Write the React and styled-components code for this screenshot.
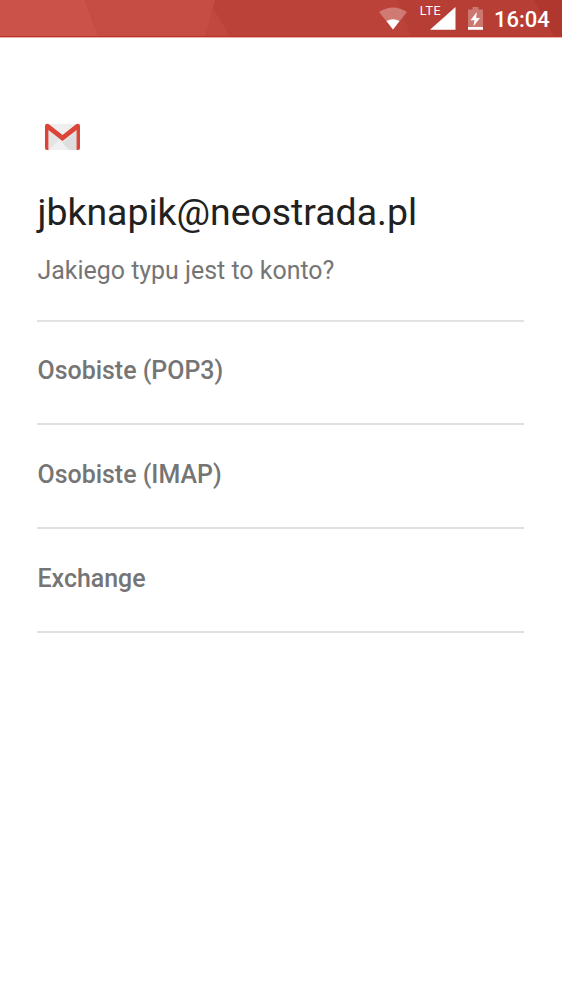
import React from "react";
import styled, { createGlobalStyle } from "styled-components";

const GlobalStyle = createGlobalStyle`
  * { box-sizing: border-box; }
  body { margin: 0; background: #fff; font-family: Roboto, sans-serif; overflow: hidden; }
`;

const Screen = styled.div`
  width: 562px;
  height: 999px;
  background: #fff;
`;

const StatusBar = styled.header`
  position: relative;
  height: 38px;
  background: #bb4238;
`;

const Backdrop = styled.svg`
  position: absolute;
  inset: 0;
  display: block;
`;

const StatusItems = styled.div`
  position: relative;
  display: flex;
  align-items: flex-start;
  justify-content: flex-end;
  height: 100%;
  padding-right: 12.2px;
  color: #fff;
`;

const StatusIcon = styled.svg`
  display: block;
  flex: none;
  margin: 7px ${(p) => p.$gap}px 0 0;
`;

const Network = styled.span`
  margin: 4px -11.2px 0 0;
  font-size: 12.5px;
  line-height: 14px;
  letter-spacing: 0.6px;
`;

const Clock = styled.time`
  padding-top: 7px;
  font-size: 22px;
  font-weight: 500;
  line-height: 26px;
`;

const Content = styled.main`
  padding: 85px 38px 0 37px;
`;

const Logo = styled.svg`
  display: block;
  margin-left: 8px;
`;

const Email = styled.h1`
  margin: 39px 0 0 0.5px;
  font-size: 37.4px;
  font-weight: 400;
  line-height: 44px;
  color: #212121;
`;

const Question = styled.p`
  margin: 21.5px 0 0 0.5px;
  font-size: 24.95px;
  line-height: 29px;
  color: #757575;
`;

const Options = styled.div`
  margin-top: 35px;
  border-top: 2px solid #e2e2e2;
`;

const Option = styled.button`
  display: flex;
  align-items: center;
  width: 100%;
  height: 103.8px;
  padding: 0 0 3.6px 0.5px;
  border: 0;
  border-bottom: 2px solid #e0e0e0;
  background: none;
  font: 500 24.95px/29px Roboto, sans-serif;
  color: #757575;
  text-align: left;
`;

const accountTypes = ["Osobiste (POP3)", "Osobiste (IMAP)", "Exchange"];

function GmailLogo() {
  return (
    <Logo width="35" height="28" viewBox="0 0 36 28" preserveAspectRatio="none" aria-label="Gmail">
      <path d="M2 1H34Q36 1 36 3V25Q36 27 34 27H2Q0 27 0 25V3Q0 1 2 1Z" fill="#e9e9e9" />
      <path d="M4 27L14 17L18 20L22 17L32 27Z" fill="#f0f0f0" />
      <path d="M4 8L14 17L4 27Z" fill="#e4e4e4" />
      <path d="M18 20L33 7V27H25Z" fill="#dedede" />
      <path d="M3 1H33L18 13Z" fill="#eeeeee" />
      <path d="M0 3Q0 .8 2.4 .8Q3.5 .8 4.3 1.5L18 12L31.7 1.5Q32.5 .8 33.6 .8Q36 .8 36 3V25Q36 27 34 27H32.5V7L18 18L3.5 7V27H2Q0 27 0 25Z" fill="#db4437" />
    </Logo>
  );
}

export default function App() {
  return (
    <Screen>
      <GlobalStyle />
      <StatusBar>
        <Backdrop width="562" height="38" viewBox="0 0 562 38">
          <path d="M0 0H85L99 38H0Z" fill="#cb5248" />
          <path d="M85 0H215L205 38H99Z" fill="#c64d43" />
          <path d="M213 8L231 38H205Z" fill="#c1483e" />
          <path d="M397 0H534L555 38H412Z" fill="#b73e34" />
          <path d="M534 0H562V38H555Z" fill="#b0372e" />
          <path d="M0 36H562V37H0Z" fill="#bd3228" />
          <path d="M0 37H562V38H0Z" fill="#eeb0aa" />
        </Backdrop>
        <StatusItems>
          <StatusIcon $gap={13} width="28" height="24" viewBox="0 0 28 24">
            <path d="M0 5Q14-4 28 5L14 22.5Z" fill="#fff" fillOpacity=".3" />
            <path d="M7.5 14Q14 10.5 20.5 14L14 22.5Z" fill="#fff" />
          </StatusIcon>
          <Network>LTE</Network>
          <StatusIcon $gap={12} width="26" height="24" viewBox="0 0 26 24">
            <path d="M25.5 0V22.8H0Z" fill="#fff" />
          </StatusIcon>
          <StatusIcon $gap={11} width="15" height="24" viewBox="0 0 15 24">
            <path d="M4.5 0H10.5V2.5H15V20H0V2.5H4.5Z" fill="#fff" fillOpacity=".3" />
            <path d="M0 20H15V22.8H0Z" fill="#fff" />
            <path d="M8.8 5L2.5 13.2H6.4L5.5 19.2L12 11H8.2Z" fill="#fff" />
          </StatusIcon>
          <Clock>16:04</Clock>
        </StatusItems>
      </StatusBar>
      <Content>
        <GmailLogo />
        <Email>jbknapik@neostrada.pl</Email>
        <Question>Jakiego typu jest to konto?</Question>
        <Options>
          {accountTypes.map((type) => (
            <Option key={type}>{type}</Option>
          ))}
        </Options>
      </Content>
    </Screen>
  );
}
